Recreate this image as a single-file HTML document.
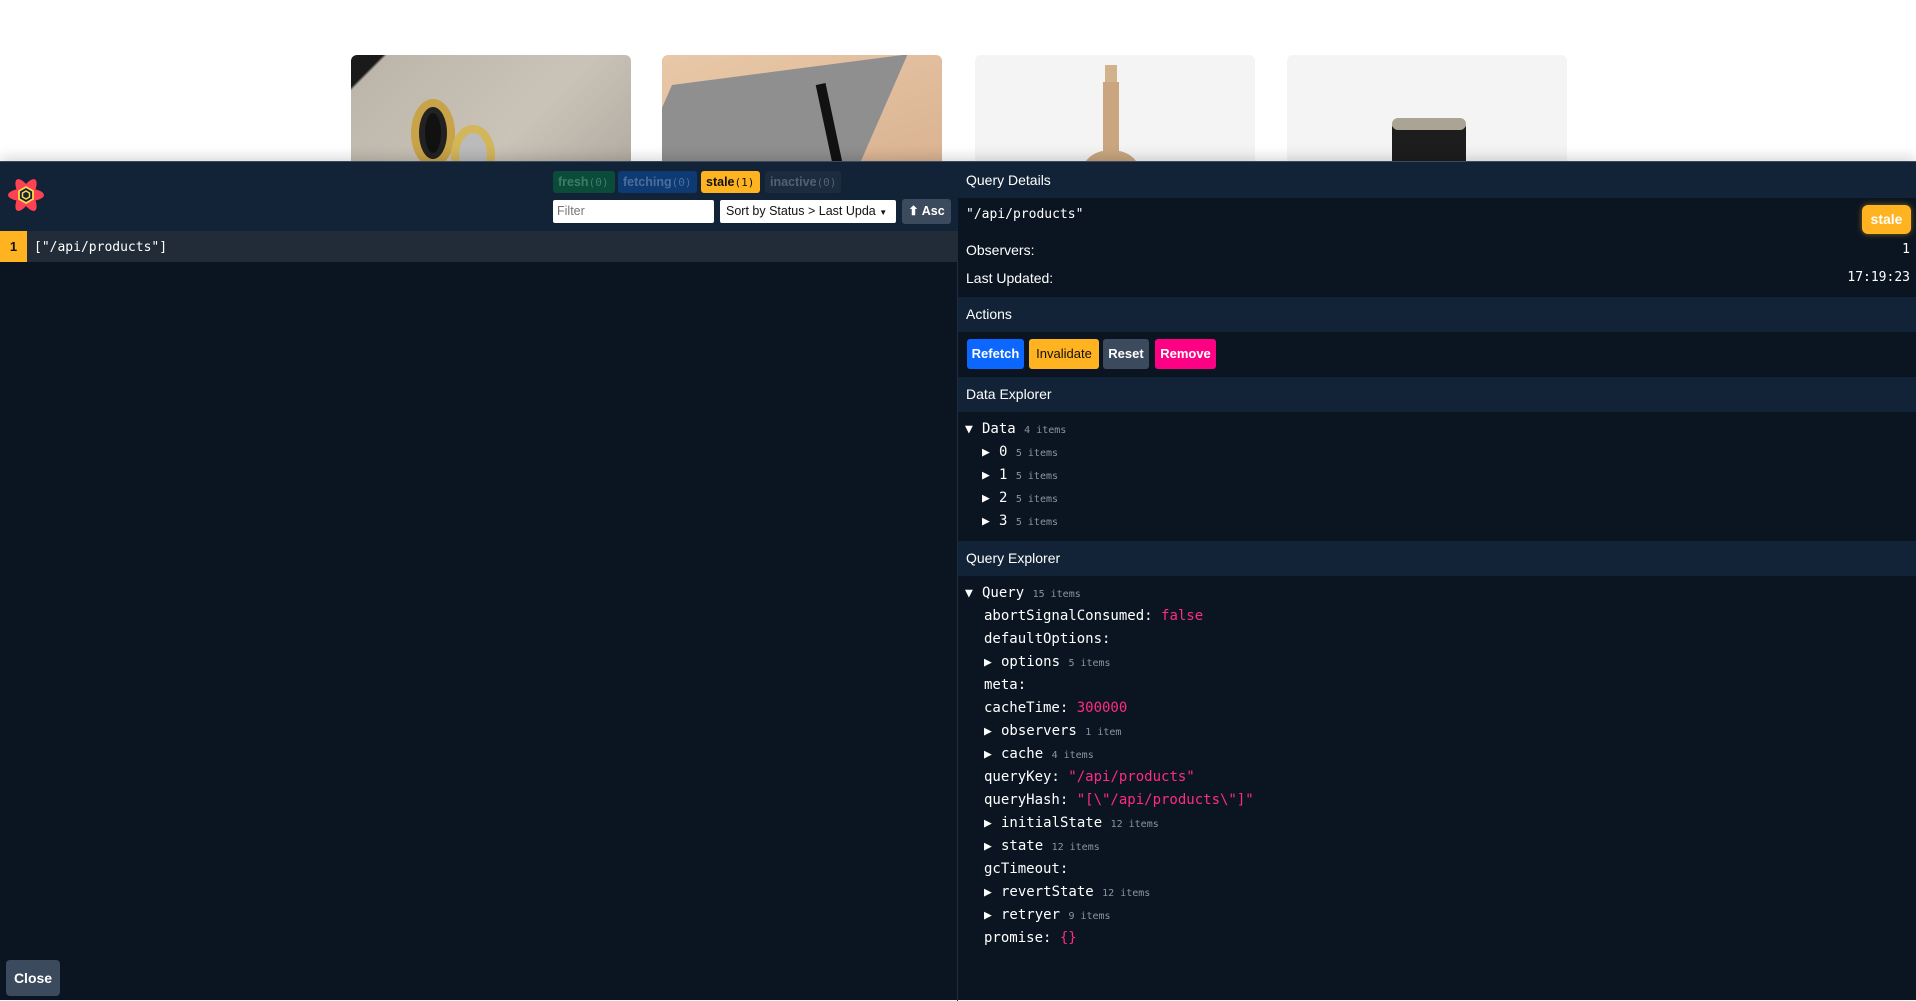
<!DOCTYPE html>
<html><head><meta charset="utf-8"><style>
*{box-sizing:border-box;margin:0;padding:0}
body{width:1916px;height:1000px;background:#fff;position:relative;overflow:hidden;font-family:"Liberation Sans",sans-serif}
.card{position:absolute;top:55px;width:280px;height:120px;border-radius:6px 6px 0 0;overflow:hidden}
#panel{position:absolute;left:0;top:161px;width:1916px;height:839px;background:#0b1521;border-top:1px solid #3a4a5c;box-shadow:0 -4px 12px rgba(0,0,0,.15)}
#left{position:absolute;left:0;top:0;width:958px;height:839px;border-right:1px solid #1f2d3d}
#lhead{position:absolute;left:0;top:0;width:958px;height:70px;background:#132337}
.fb{position:absolute;top:9px;height:22px;border-radius:3px;font-size:12.5px;font-weight:bold;line-height:22px;padding:0 5px}
.fb span{font-family:"DejaVu Sans Mono",monospace;font-weight:normal;font-size:11px}
.row{position:absolute;left:0;top:70px;width:958px;height:31px;background:#222b38;font-family:"DejaVu Sans Mono",monospace;font-size:13px;color:#fff;line-height:31px}
.sec{position:absolute;left:958px;width:958px;background:#132337;color:#fff;font-size:14px;padding-left:8px}
.mono{font-family:"DejaVu Sans Mono",monospace}
.t{position:absolute;color:#fff;font-size:14px}
.ab{position:absolute;top:177px;height:30px;border-radius:3px;font-size:13px;font-weight:bold;line-height:30px;text-align:center;color:#fff}
.ln{position:absolute;font-family:"DejaVu Sans Mono",monospace;font-size:14px;color:#fff;white-space:pre;height:23px;line-height:23px}
.ln i{font-style:normal;font-size:10px;color:#8b94a0}
.ln b{font-weight:normal;color:#ff2a85}
.tri{display:inline-block;width:17px;font-size:13px}
</style></head><body>
<div class="card" style="left:351px;background:linear-gradient(135deg,#1a1a1a 0 8%,#bdb6ab 9%,#c9c3b8 60%,#b1aaa0);">
<div style="position:absolute;left:60px;top:44px;width:44px;height:68px;border:8px solid #c8a347;border-radius:50%;background:#111;box-shadow:inset 0 0 0 6px #222"></div>
<div style="position:absolute;left:100px;top:70px;width:44px;height:60px;border:8px solid #d3b55a;border-radius:50%;background:#bbb"></div></div>
<div class="card" style="left:662px;background:linear-gradient(160deg,#e8c8a8,#d9b291);">
<div style="position:absolute;left:10px;top:30px;width:220px;height:140px;background:#8f8f8f;transform:skewX(-30deg) rotate(-8deg);transform-origin:0 0"></div>
<div style="position:absolute;left:164px;top:28px;width:10px;height:100px;background:#111;transform:rotate(-12deg)"></div></div>
<div class="card" style="left:975px;background:#f4f4f4;">
<div style="position:absolute;left:130px;top:10px;width:12px;height:17px;background:#d1b28a"></div>
<div style="position:absolute;left:128px;top:27px;width:16px;height:80px;background:#c9a67f"></div>
<div style="position:absolute;left:108px;top:95px;width:56px;height:40px;border-radius:50%;background:#c9a67f"></div></div>
<div class="card" style="left:1287px;background:#f4f4f4;">
<div style="position:absolute;left:105px;top:63px;width:74px;height:70px;border-radius:10px 10px 0 0;background:#1d1d1d"></div>
<div style="position:absolute;left:105px;top:63px;width:74px;height:12px;border-radius:10px;background:#a9a493"></div></div>

<div id="panel">
<div id="left">
<div id="lhead">
<svg style="position:absolute;left:6px;top:13px" width="40" height="40" viewBox="-20 -20 40 40">
<g fill="#ff4154"><ellipse rx="6.5" ry="18" transform="rotate(30)"/><ellipse rx="6.5" ry="18" transform="rotate(-30)"/><ellipse rx="6.5" ry="18" transform="rotate(90)"/></g>
<polygon points="0,-8 7,-4 7,4 0,8 -7,4 -7,-4" fill="#132337" stroke="#ffd94c" stroke-width="1.8"/>
<polygon points="0,-4 3.5,-2 3.5,2 0,4 -3.5,2 -3.5,-2" fill="none" stroke="#ffd94c" stroke-width="1.5"/></svg>
<div class="fb" style="left:553px;width:62px;background:#0b4b3a;color:#3c7d64">fresh<span>(0)</span></div>
<div class="fb" style="left:618px;width:79px;background:#0d3a72;color:#4d6c9c">fetching<span>(0)</span></div>
<div class="fb" style="left:701px;width:59px;background:#ffb320;color:#111">stale<span>(1)</span></div>
<div class="fb" style="left:765px;width:76px;background:#1c2b3e;color:#526274">inactive<span>(0)</span></div>
<div style="position:absolute;left:553px;top:38px;width:161px;height:23px;background:#fff;border-radius:2px;font-size:12.5px;color:#777;line-height:23px;padding-left:4px">Filter</div>
<div style="position:absolute;left:720px;top:38px;width:176px;height:23px;background:#fff;border-radius:2px;font-size:12.5px;color:#111;line-height:23px;padding-left:6px">Sort by Status &gt; Last Upda <span style="font-size:8px">▼</span></div>
<div style="position:absolute;left:902px;top:37px;width:49px;height:25px;background:#3b4a5c;border-radius:3px;font-size:12.5px;font-weight:bold;color:#fff;line-height:25px;text-align:center">⬆ Asc</div>
</div>
<div class="row" style="top:69px"><span style="display:inline-block;width:27px;height:31px;background:#ffb320;color:#111;text-align:center;font-family:'Liberation Sans',sans-serif;font-weight:bold">1</span><span style="margin-left:7px">["/api/products"]</span></div>
<div style="position:absolute;left:6px;top:798px;width:54px;height:36px;background:#3b4a5c;border-radius:4px;color:#fff;font-weight:bold;font-size:14px;line-height:36px;text-align:center">Close</div>
</div>

<div class="sec" style="top:0;height:36px;line-height:36px;left:958px">Query Details</div>
<div class="t mono" style="left:966px;top:45px;font-size:13px">"/api/products"</div>
<div style="position:absolute;left:1862px;top:43px;width:49px;height:29px;background:#ffb320;border-radius:6px;color:#fff;font-weight:bold;font-size:14px;line-height:29px;text-align:center;box-shadow:0 0 6px rgba(255,179,32,.5)">stale</div>
<div class="t" style="left:966px;top:80px">Observers:</div>
<div class="t mono" style="right:6px;top:80px;font-size:13px">1</div>
<div class="t" style="left:966px;top:108px">Last Updated:</div>
<div class="t mono" style="right:6px;top:108px;font-size:13px">17:19:23</div>
<div class="sec" style="top:135px;height:35px;line-height:35px">Actions</div>
<div class="ab" style="left:967px;width:57px;background:#0b67ff">Refetch</div>
<div class="ab" style="left:1029px;width:70px;background:#ffb320;color:#111;font-weight:normal">Invalidate</div>
<div class="ab" style="left:1103px;width:46px;background:#3b4a5c">Reset</div>
<div class="ab" style="left:1155px;width:61px;background:#ff0085">Remove</div>
<div class="sec" style="top:215px;height:35px;line-height:35px">Data Explorer</div>
<div class="ln" style="left:965px;top:256px"><span class="tri">▼</span>Data <i>4 items</i></div>
<div class="ln" style="left:982px;top:279px"><span class="tri">▶</span>0 <i>5 items</i></div>
<div class="ln" style="left:982px;top:302px"><span class="tri">▶</span>1 <i>5 items</i></div>
<div class="ln" style="left:982px;top:325px"><span class="tri">▶</span>2 <i>5 items</i></div>
<div class="ln" style="left:982px;top:348px"><span class="tri">▶</span>3 <i>5 items</i></div>
<div class="sec" style="top:379px;height:35px;line-height:35px">Query Explorer</div>
<div class="ln" style="left:965px;top:420px"><span class="tri">▼</span>Query <i>15 items</i></div>
<div class="ln" style="left:984px;top:443px">abortSignalConsumed: <b>false</b></div>
<div class="ln" style="left:984px;top:466px">defaultOptions:</div>
<div class="ln" style="left:984px;top:489px"><span class="tri">▶</span>options <i>5 items</i></div>
<div class="ln" style="left:984px;top:512px">meta:</div>
<div class="ln" style="left:984px;top:535px">cacheTime: <b>300000</b></div>
<div class="ln" style="left:984px;top:558px"><span class="tri">▶</span>observers <i>1 item</i></div>
<div class="ln" style="left:984px;top:581px"><span class="tri">▶</span>cache <i>4 items</i></div>
<div class="ln" style="left:984px;top:604px">queryKey: <b>"/api/products"</b></div>
<div class="ln" style="left:984px;top:627px">queryHash: <b>"[\"/api/products\"]"</b></div>
<div class="ln" style="left:984px;top:650px"><span class="tri">▶</span>initialState <i>12 items</i></div>
<div class="ln" style="left:984px;top:673px"><span class="tri">▶</span>state <i>12 items</i></div>
<div class="ln" style="left:984px;top:696px">gcTimeout:</div>
<div class="ln" style="left:984px;top:719px"><span class="tri">▶</span>revertState <i>12 items</i></div>
<div class="ln" style="left:984px;top:742px"><span class="tri">▶</span>retryer <i>9 items</i></div>
<div class="ln" style="left:984px;top:765px">promise: <b>{}</b></div>
</div>
</body></html>
